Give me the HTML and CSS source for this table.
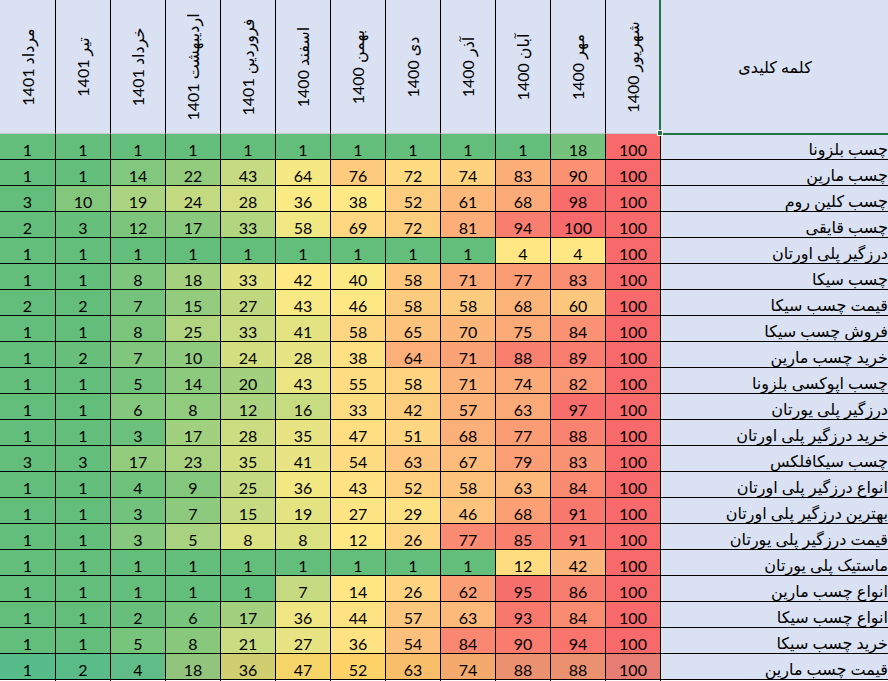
FILE: index.html
```html
<!DOCTYPE html>
<html lang="fa" dir="rtl">
<head>
<meta charset="utf-8">
<title>کلمات کلیدی</title>
<link rel="stylesheet" href="styles.css">
</head>
<body>
<div class="sheet">
  <div class="row header">
    <div class="cell head kw-head">کلمه کلیدی<span class="selection"><span class="handle"></span></span></div>
    <div class="cell head month"><span>شهریور 1400</span></div>
    <div class="cell head month"><span>مهر 1400</span></div>
    <div class="cell head month"><span>آبان 1400</span></div>
    <div class="cell head month"><span>آذر 1400</span></div>
    <div class="cell head month"><span>دی 1400</span></div>
    <div class="cell head month"><span>بهمن 1400</span></div>
    <div class="cell head month"><span>اسفند 1400</span></div>
    <div class="cell head month"><span>فروردین 1401</span></div>
    <div class="cell head month"><span>اردیبهشت 1401</span></div>
    <div class="cell head month"><span>خرداد 1401</span></div>
    <div class="cell head month"><span>تیر 1401</span></div>
    <div class="cell head month"><span>مرداد 1401</span></div>
  </div>
  <div class="row" data-scale="excel"><div class="cell kw">چسب بلزونا</div><div class="cell num">100</div><div class="cell num" style="background-color:#74c27b">18</div><div class="cell num">1</div><div class="cell num">1</div><div class="cell num">1</div><div class="cell num">1</div><div class="cell num">1</div><div class="cell num">1</div><div class="cell num">1</div><div class="cell num">1</div><div class="cell num">1</div><div class="cell num">1</div></div>
  <div class="row" data-scale="excel"><div class="cell kw">چسب مارین</div><div class="cell num">100</div><div class="cell num">90</div><div class="cell num">83</div><div class="cell num">74</div><div class="cell num">72</div><div class="cell num">76</div><div class="cell num">64</div><div class="cell num">43</div><div class="cell num">22</div><div class="cell num">14</div><div class="cell num">1</div><div class="cell num">1</div></div>
  <div class="row" data-scale="excel"><div class="cell kw">چسب کلین روم</div><div class="cell num">100</div><div class="cell num">98</div><div class="cell num">68</div><div class="cell num">61</div><div class="cell num">52</div><div class="cell num">38</div><div class="cell num">36</div><div class="cell num">28</div><div class="cell num">24</div><div class="cell num">19</div><div class="cell num">10</div><div class="cell num">3</div></div>
  <div class="row" data-scale="excel"><div class="cell kw">چسب قایقی</div><div class="cell num">100</div><div class="cell num">100</div><div class="cell num">94</div><div class="cell num">81</div><div class="cell num">72</div><div class="cell num">69</div><div class="cell num">58</div><div class="cell num">33</div><div class="cell num">17</div><div class="cell num">12</div><div class="cell num">3</div><div class="cell num">2</div></div>
  <div class="row" data-scale="excel"><div class="cell kw">درزگیر پلی اورتان</div><div class="cell num">100</div><div class="cell num">4</div><div class="cell num">4</div><div class="cell num">1</div><div class="cell num">1</div><div class="cell num">1</div><div class="cell num">1</div><div class="cell num">1</div><div class="cell num">1</div><div class="cell num">1</div><div class="cell num">1</div><div class="cell num">1</div></div>
  <div class="row" data-scale="excel"><div class="cell kw">چسب سیکا</div><div class="cell num">100</div><div class="cell num">83</div><div class="cell num">77</div><div class="cell num">71</div><div class="cell num">58</div><div class="cell num">40</div><div class="cell num">42</div><div class="cell num">33</div><div class="cell num">18</div><div class="cell num">8</div><div class="cell num">1</div><div class="cell num">1</div></div>
  <div class="row" data-scale="excel"><div class="cell kw">قیمت چسب سیکا</div><div class="cell num">100</div><div class="cell num">60</div><div class="cell num">68</div><div class="cell num">58</div><div class="cell num">58</div><div class="cell num">46</div><div class="cell num">43</div><div class="cell num">27</div><div class="cell num">15</div><div class="cell num">7</div><div class="cell num">2</div><div class="cell num">2</div></div>
  <div class="row" data-scale="excel"><div class="cell kw">فروش چسب سیکا</div><div class="cell num">100</div><div class="cell num">84</div><div class="cell num">75</div><div class="cell num">70</div><div class="cell num">65</div><div class="cell num">58</div><div class="cell num">41</div><div class="cell num">33</div><div class="cell num">25</div><div class="cell num">8</div><div class="cell num">1</div><div class="cell num">1</div></div>
  <div class="row" data-scale="excel"><div class="cell kw">خرید چسب مارین</div><div class="cell num">100</div><div class="cell num">89</div><div class="cell num">88</div><div class="cell num">71</div><div class="cell num">64</div><div class="cell num">38</div><div class="cell num">28</div><div class="cell num">24</div><div class="cell num">10</div><div class="cell num">7</div><div class="cell num">2</div><div class="cell num">1</div></div>
  <div class="row" data-scale="excel"><div class="cell kw">چسب اپوکسی بلزونا</div><div class="cell num">100</div><div class="cell num">82</div><div class="cell num">74</div><div class="cell num">71</div><div class="cell num">58</div><div class="cell num">55</div><div class="cell num">43</div><div class="cell num">20</div><div class="cell num">14</div><div class="cell num">5</div><div class="cell num">1</div><div class="cell num">1</div></div>
  <div class="row" data-scale="excel"><div class="cell kw">درزگیر پلی یورتان</div><div class="cell num">100</div><div class="cell num">97</div><div class="cell num">63</div><div class="cell num">57</div><div class="cell num">42</div><div class="cell num">33</div><div class="cell num">16</div><div class="cell num">12</div><div class="cell num">8</div><div class="cell num">6</div><div class="cell num">1</div><div class="cell num">1</div></div>
  <div class="row" data-scale="excel"><div class="cell kw">خرید درزگیر پلی اورتان</div><div class="cell num">100</div><div class="cell num">88</div><div class="cell num">77</div><div class="cell num">68</div><div class="cell num">51</div><div class="cell num">47</div><div class="cell num">35</div><div class="cell num">28</div><div class="cell num">17</div><div class="cell num">3</div><div class="cell num">1</div><div class="cell num">1</div></div>
  <div class="row" data-scale="excel"><div class="cell kw">چسب سیکافلکس</div><div class="cell num">100</div><div class="cell num">83</div><div class="cell num">79</div><div class="cell num">67</div><div class="cell num">63</div><div class="cell num">54</div><div class="cell num">41</div><div class="cell num">35</div><div class="cell num">23</div><div class="cell num">17</div><div class="cell num">3</div><div class="cell num">3</div></div>
  <div class="row" data-scale="excel"><div class="cell kw">انواع درزگیر پلی اورتان</div><div class="cell num">100</div><div class="cell num">84</div><div class="cell num">63</div><div class="cell num">58</div><div class="cell num">52</div><div class="cell num">43</div><div class="cell num">36</div><div class="cell num">25</div><div class="cell num">9</div><div class="cell num">4</div><div class="cell num">1</div><div class="cell num">1</div></div>
  <div class="row" data-scale="excel"><div class="cell kw">بهترین درزگیر پلی اورتان</div><div class="cell num">100</div><div class="cell num">91</div><div class="cell num">68</div><div class="cell num">46</div><div class="cell num">29</div><div class="cell num">27</div><div class="cell num">19</div><div class="cell num">15</div><div class="cell num">7</div><div class="cell num">3</div><div class="cell num">1</div><div class="cell num">1</div></div>
  <div class="row" data-scale="excel"><div class="cell kw">قیمت درزگیر پلی یورتان</div><div class="cell num">100</div><div class="cell num">91</div><div class="cell num">85</div><div class="cell num">77</div><div class="cell num">26</div><div class="cell num">12</div><div class="cell num">8</div><div class="cell num">8</div><div class="cell num">5</div><div class="cell num">3</div><div class="cell num">1</div><div class="cell num">1</div></div>
  <div class="row" data-scale="excel"><div class="cell kw">ماستیک پلی یورتان</div><div class="cell num">100</div><div class="cell num">42</div><div class="cell num">12</div><div class="cell num">1</div><div class="cell num">1</div><div class="cell num">1</div><div class="cell num">1</div><div class="cell num">1</div><div class="cell num">1</div><div class="cell num">1</div><div class="cell num">1</div><div class="cell num">1</div></div>
  <div class="row" data-scale="excel"><div class="cell kw">انواع چسب مارین</div><div class="cell num">100</div><div class="cell num">86</div><div class="cell num">95</div><div class="cell num">62</div><div class="cell num">26</div><div class="cell num">14</div><div class="cell num">7</div><div class="cell num">1</div><div class="cell num">1</div><div class="cell num">1</div><div class="cell num">1</div><div class="cell num">1</div></div>
  <div class="row" data-scale="excel"><div class="cell kw">انواع چسب سیکا</div><div class="cell num">100</div><div class="cell num">84</div><div class="cell num">93</div><div class="cell num">63</div><div class="cell num">57</div><div class="cell num">44</div><div class="cell num">36</div><div class="cell num">17</div><div class="cell num">6</div><div class="cell num">2</div><div class="cell num">1</div><div class="cell num">1</div></div>
  <div class="row" data-scale="excel"><div class="cell kw">خرید چسب سیکا</div><div class="cell num">100</div><div class="cell num">94</div><div class="cell num">90</div><div class="cell num">84</div><div class="cell num">54</div><div class="cell num">36</div><div class="cell num">27</div><div class="cell num">21</div><div class="cell num">8</div><div class="cell num">5</div><div class="cell num">1</div><div class="cell num">1</div></div>
  <div class="row" data-scale="sheets"><div class="cell kw">قیمت چسب مارین</div><div class="cell num">100</div><div class="cell num">88</div><div class="cell num">88</div><div class="cell num">74</div><div class="cell num">63</div><div class="cell num">52</div><div class="cell num">47</div><div class="cell num">36</div><div class="cell num">18</div><div class="cell num">4</div><div class="cell num">2</div><div class="cell num">1</div></div>
  <div class="row empty"><div class="cell"></div><div class="cell"></div><div class="cell"></div><div class="cell"></div><div class="cell"></div><div class="cell"></div><div class="cell"></div><div class="cell"></div><div class="cell"></div><div class="cell"></div><div class="cell"></div><div class="cell"></div><div class="cell"></div></div>
</div>
<script src="script.js"></script>
</body>
</html>
```

FILE: styles.css
```css
html, body {
  margin: 0;
  padding: 0;
  overflow: hidden;
  background: #ffffff;
}

body {
  font-family: "Lato", "DejaVu Sans", sans-serif;
  color: #000000;
}

.sheet {
  display: grid;
  width: 890px;
  margin-right: -2px;
  grid-template-columns: 229px repeat(11, 55px) 56px;
  grid-template-rows: 134px;
  grid-auto-rows: 26px;
}

.row {
  display: contents;
}

.cell {
  box-sizing: border-box;
  border-right: 1px solid #000000;
  border-bottom: 1px solid #000000;
  display: flex;
  align-items: flex-end;
  justify-content: center;
  font-size: 16px;
  line-height: normal;
  white-space: nowrap;
  background: #ffffff;
}

.head {
  background: #d9e1f2;
  border-bottom-color: #c8c8c8;
  align-items: center;
}

.month span {
  display: block;
  transform: rotate(-90deg);
}

.kw-head {
  position: relative;
}

.selection {
  position: absolute;
  left: -2px;
  top: -2px;
  right: -2px;
  bottom: -2px;
  border: 2px solid #217346;
  z-index: 2;
  pointer-events: none;
}

.handle {
  position: absolute;
  left: -4px;
  bottom: -3px;
  width: 4px;
  height: 4px;
  background: #217346;
  border: 1px solid #ffffff;
}

.kw {
  background: #d9e1f2;
  justify-content: flex-start;
  padding-right: 1px;
  overflow: hidden;
}
```

FILE: script.js
```js
(function () {
  var palettes = {
    excel: [[99, 190, 123], [255, 235, 132], [248, 105, 107]],
    sheets: [[87, 187, 138], [255, 214, 102], [230, 124, 115]]
  };
  function mix(a, b, t) {
    return a.map(function (v, i) { return Math.round(v + (b[i] - v) * t); });
  }
  document.querySelectorAll('.row[data-scale]').forEach(function (row) {
    var p = palettes[row.dataset.scale];
    var cells = Array.prototype.slice.call(row.querySelectorAll('.num'));
    var vals = cells.map(function (c) { return parseFloat(c.textContent); });
    var s = vals.slice().sort(function (a, b) { return a - b; });
    var n = s.length, min = s[0], max = s[n - 1];
    var pos = (n - 1) * 0.5, lo = Math.floor(pos), hi = Math.ceil(pos);
    var mid = s[lo] + (s[hi] - s[lo]) * (pos - lo);
    cells.forEach(function (c, i) {
      if (c.style.backgroundColor) return;
      var v = vals[i], col;
      if (v <= mid) {
        col = mid === min ? p[0] : mix(p[0], p[1], (v - min) / (mid - min));
      } else {
        col = mix(p[1], p[2], (v - mid) / (max - mid));
      }
      c.style.backgroundColor = 'rgb(' + col.join(',') + ')';
    });
  });
})();
```
